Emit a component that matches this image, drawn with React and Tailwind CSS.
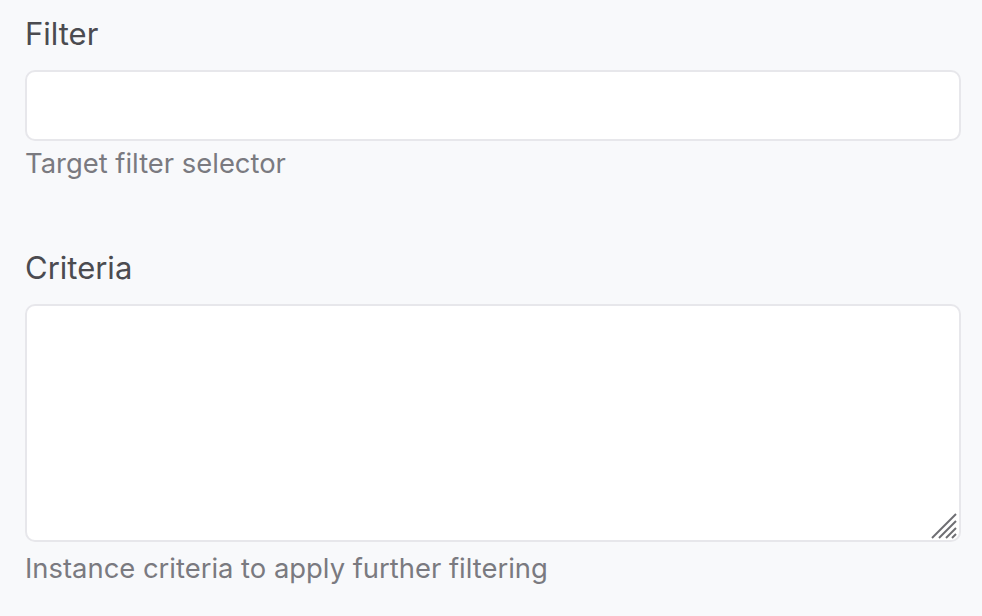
import React from 'react';

function Field({ label, hint, children, className = '', hintGap = 'mt-[6px]' }) {
    return (
        <div className={className}>
            <label className="block text-[31px] leading-[36px] text-[#4b4b50] mb-[18px]">{label}</label>
            {children}
            <p className={`text-[27.4px] leading-[32px] text-[#7a7a80] ${hintGap}`}>{hint}</p>
        </div>
    );
}

export default function App() {
    return (
        <div
            className="min-h-[616px] w-full bg-[#f8f9fb] pl-[25px] pr-[21px] pt-[16px]"
            style={{ fontFamily: 'Inter, "Noto Sans", sans-serif' }}
        >
            <Field label="Filter" hint="Target filter selector">
                <input
                    type="text"
                    className="block w-full h-[71px] bg-white border-2 border-[#e7e7eb] rounded-[10px] outline-none px-4"
                />
            </Field>

            <Field
                label="Criteria"
                hint="Instance criteria to apply further filtering"
                className="mt-[71px]"
                hintGap="mt-[10px]"
            >
                <div className="relative">
                    <textarea className="block w-full h-[238px] bg-white border-2 border-[#e7e7eb] rounded-[10px] outline-none resize-none px-4 py-3" />
                    {/* resize grip */}
                    <svg className="absolute right-[4px] bottom-[3px]" width="26" height="26" viewBox="0 0 26 26">
                        <g stroke="#6e6e72" strokeWidth="2" strokeLinecap="butt">
                            <line x1="1" y1="25" x2="25" y2="1" />
                            <line x1="8" y1="25" x2="25" y2="8" />
                            <line x1="15" y1="25" x2="25" y2="15" />
                            <line x1="21" y1="25" x2="25" y2="21" />
                        </g>
                    </svg>
                </div>
            </Field>
        </div>
    );
}
